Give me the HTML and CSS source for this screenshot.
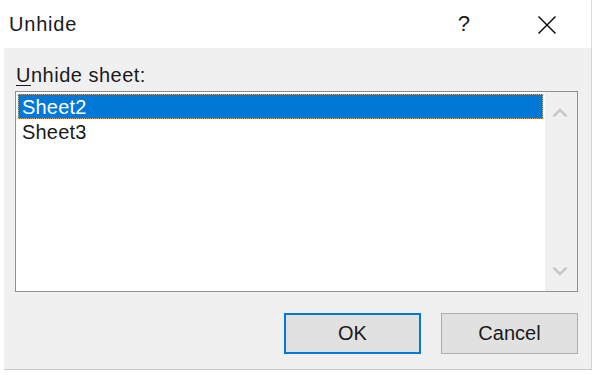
FILE: index.html
```html
<!DOCTYPE html>
<html>
<head>
<meta charset="utf-8">
<link rel="stylesheet" href="styles.css">
</head>
<body>
<div class="dialog">
  <div class="titlebar">
    <span class="title">Unhide</span>
    <span class="help">?</span>
    <span class="close">
      <svg width="20" height="20" viewBox="0 0 20 20"><path d="M1.5 1.5 L18.5 18.5 M18.5 1.5 L1.5 18.5" stroke="#000" stroke-width="1.4" fill="none"/></svg>
    </span>
  </div>
  <div class="content">
    <div class="label"><u>U</u>nhide sheet:</div>
    <div class="listbox">
      <div class="items">
        <div class="item selected">Sheet2</div>
        <div class="item">Sheet3</div>
      </div>
      <div class="scrollbar">
        <svg width="16" height="10" viewBox="0 0 16 10"><path d="M1.5 8.5 L8 2 L14.5 8.5" stroke="#c4c4c4" stroke-width="2.4" fill="none"/></svg>
        <svg width="16" height="10" viewBox="0 0 16 10"><path d="M1.5 1.5 L8 8 L14.5 1.5" stroke="#c4c4c4" stroke-width="2.4" fill="none"/></svg>
      </div>
    </div>
    <div class="buttons">
      <button class="btn default">OK</button>
      <button class="btn">Cancel</button>
    </div>
  </div>
</div>
</body>
</html>
```

FILE: styles.css
```css
html, body {
  margin: 0;
  padding: 0;
  background: #fff;
}
.dialog {
  width: 595px;
  height: 375px;
  background: #fff;
  display: flex;
  flex-direction: column;
  font-family: "Segoe UI", "Liberation Sans", Arial, sans-serif;
  color: #000;
  overflow: hidden;
}
.titlebar {
  height: 48px;
  display: flex;
  align-items: center;
  padding-left: 9px;
  padding-right: 34px;
  border-right: 1px solid #dcdcdc;
  margin-right: 3px;
}
.title {
  font-size: 20px;
  letter-spacing: 0.8px;
  flex: 1;
  color: #1a1a1a;
}
.help {
  font-size: 22px;
  margin-right: 67px;
  color: #1a1a1a;
}
.close {
  display: flex;
  margin-top: 1px;
}
.content {
  height: 322px;
  margin-left: 4px;
  margin-right: 3px;
  background: #f0f0f0;
  border-right: 1px solid #d4d4d4;
  border-bottom: 1px solid #c9c9c9;
  display: flex;
  flex-direction: column;
  padding: 15px 13px 0 11px;
  box-sizing: border-box;
}
.label {
  font-size: 20px;
  letter-spacing: 0.5px;
  line-height: 24px;
  padding-left: 1px;
  height: 28px;
  color: #1a1a1a;
}
.label u {
  text-decoration-thickness: 1px;
  text-underline-offset: 3px;
}
.listbox {
  height: 201px;
  border: 1px solid #8c8f95;
  background: #fff;
  box-sizing: border-box;
  display: flex;
  padding: 2px 0 0 2px;
}
.items {
  flex: 1;
  display: flex;
  flex-direction: column;
}
.item {
  height: 25px;
  line-height: 25px;
  font-size: 20px;
  letter-spacing: 0.2px;
  padding: 1px 0 0 4px;
  box-sizing: border-box;
  color: #1a1a1a;
}
.item.selected {
  background: #0078d7;
  color: #fff;
  outline: 1px dotted #f59a3a;
  outline-offset: -1px;
}
.scrollbar {
  width: 32px;
  margin-left: 2px;
  margin-top: -2px;
  background: #f0f0f0;
  display: flex;
  flex-direction: column;
  justify-content: space-between;
  align-items: center;
  padding: 16px 3px 15px 0;
  box-sizing: border-box;
}
.buttons {
  display: flex;
  justify-content: flex-end;
  gap: 20px;
  margin-top: 21px;
}
.btn {
  width: 137px;
  height: 41px;
  background: #e1e1e1;
  border: 1px solid #adadad;
  font-family: inherit;
  font-size: 20px;
  color: #1a1a1a;
  padding: 0;
  box-sizing: border-box;
}
.btn.default {
  border: 2px solid #0078d7;
}
```
